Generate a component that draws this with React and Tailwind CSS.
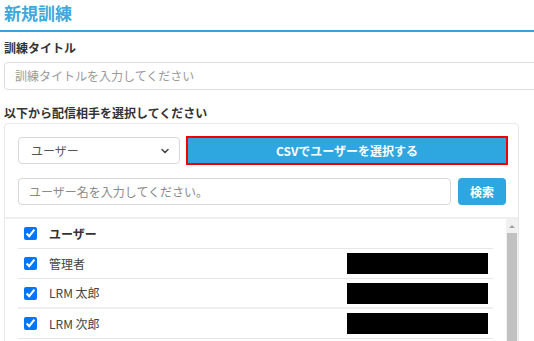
import { ChevronDown } from 'lucide-react';

const rows = [
    { name: '管理者' },
    { name: 'LRM 太郎' },
    { name: 'LRM 次郎' },
];

function Check() {
    return (
        <input
            type="checkbox"
            checked
            readOnly
            className="m-0 h-[13px] w-[13px] accent-[#0075ff]"
        />
    );
}

export default function App() {
    return (
        <div className="h-[341px] w-[534px] overflow-hidden bg-white font-['Noto_Sans_CJK_JP','Noto_Sans',sans-serif] text-[#333]">
            <div className="pl-[4px] pt-[2px]">
                <h1 className="text-[17px] font-bold leading-[22px] text-[#3ba9dd]">新規訓練</h1>
            </div>
            <div className="mt-[6px] h-[2px] bg-[#2ea7e0]" />

            <div className="w-[540px] pl-[4px]">
                <div className="mt-[7px] text-[12px] font-bold leading-[18px]">訓練タイトル</div>
                <div className="mt-[5px] flex h-[28px] items-center rounded-[4px] border border-[#dcdde2] px-[10px] text-[12px] text-[#9a9a9a]">
                    訓練タイトルを入力してください
                </div>
                <div className="mt-[14px] text-[12px] font-bold leading-[18px]">以下から配信相手を選択してください</div>
            </div>

            <div className="ml-[4px] mt-[1px] w-[515px] rounded-[4px] border border-[#e8e8ea] pt-[12px]">
                <div className="flex items-center gap-[6px] pl-[13px] pr-[10px]">
                    <div className="flex h-[27px] w-[162px] items-center justify-between rounded-[4px] border border-[#d6d8dc] pl-[12px] pr-[8px] text-[12px] text-[#555]">
                        <span>ユーザー</span>
                        <ChevronDown size={12} strokeWidth={3} className="text-[#444]" />
                    </div>
                    <div className="flex h-[29px] flex-1 items-center justify-center border-2 border-[#f00000] bg-[#2ea7e0] text-[12px] font-bold text-white">
                        CSVでユーザーを選択する
                    </div>
                </div>
                <div className="mt-[13px] flex items-center gap-[7px] pl-[13px] pr-[12px]">
                    <div className="flex h-[27px] w-[433px] items-center rounded-[4px] border border-[#d6d8dc] px-[10px] text-[12px] text-[#8a8a8a]">
                        ユーザー名を入力してください。
                    </div>
                    <div className="flex h-[27px] w-[48px] items-center justify-center rounded-[4px] bg-[#2ea7e0] text-[12px] font-bold text-white">
                        検索
                    </div>
                </div>

                <div className="mt-[12px] flex border-t-2 border-[#efefef]">
                    <div className="flex-1 pl-[13px] pr-[13px]">
                        <div className="flex h-[30px] items-center gap-[12px] border-b border-[#e6e6e6] pl-[6px]">
                            <Check />
                            <span className="text-[12px] font-bold">ユーザー</span>
                        </div>
                        {rows.map((r, i) => (
                            <div
                                key={r.name}
                                className={
                                    i === 1
                                        ? 'flex h-[30px] items-center border-b-2 border-[#efefef] pl-[6px]'
                                        : 'flex h-[30px] items-center border-b border-[#e6e6e6] pl-[6px]'
                                }
                            >
                                <Check />
                                <span className="ml-[12px] text-[12px] text-[#444]">{r.name}</span>
                                <div className="ml-auto mr-[5px] h-[21px] w-[141px] bg-black" />
                            </div>
                        ))}
                    </div>
                    <div className="flex w-[12px] flex-col bg-[#f1f1f1]">
                        <div className="flex h-[14px] items-center justify-center">
                            <div className="h-0 w-0 border-x-[3px] border-b-[3px] border-x-transparent border-b-[#a3a3a3]" />
                        </div>
                        <div className="mx-[1px] h-[200px] bg-[#c1c1c1]" />
                    </div>
                </div>
            </div>
        </div>
    );
}
